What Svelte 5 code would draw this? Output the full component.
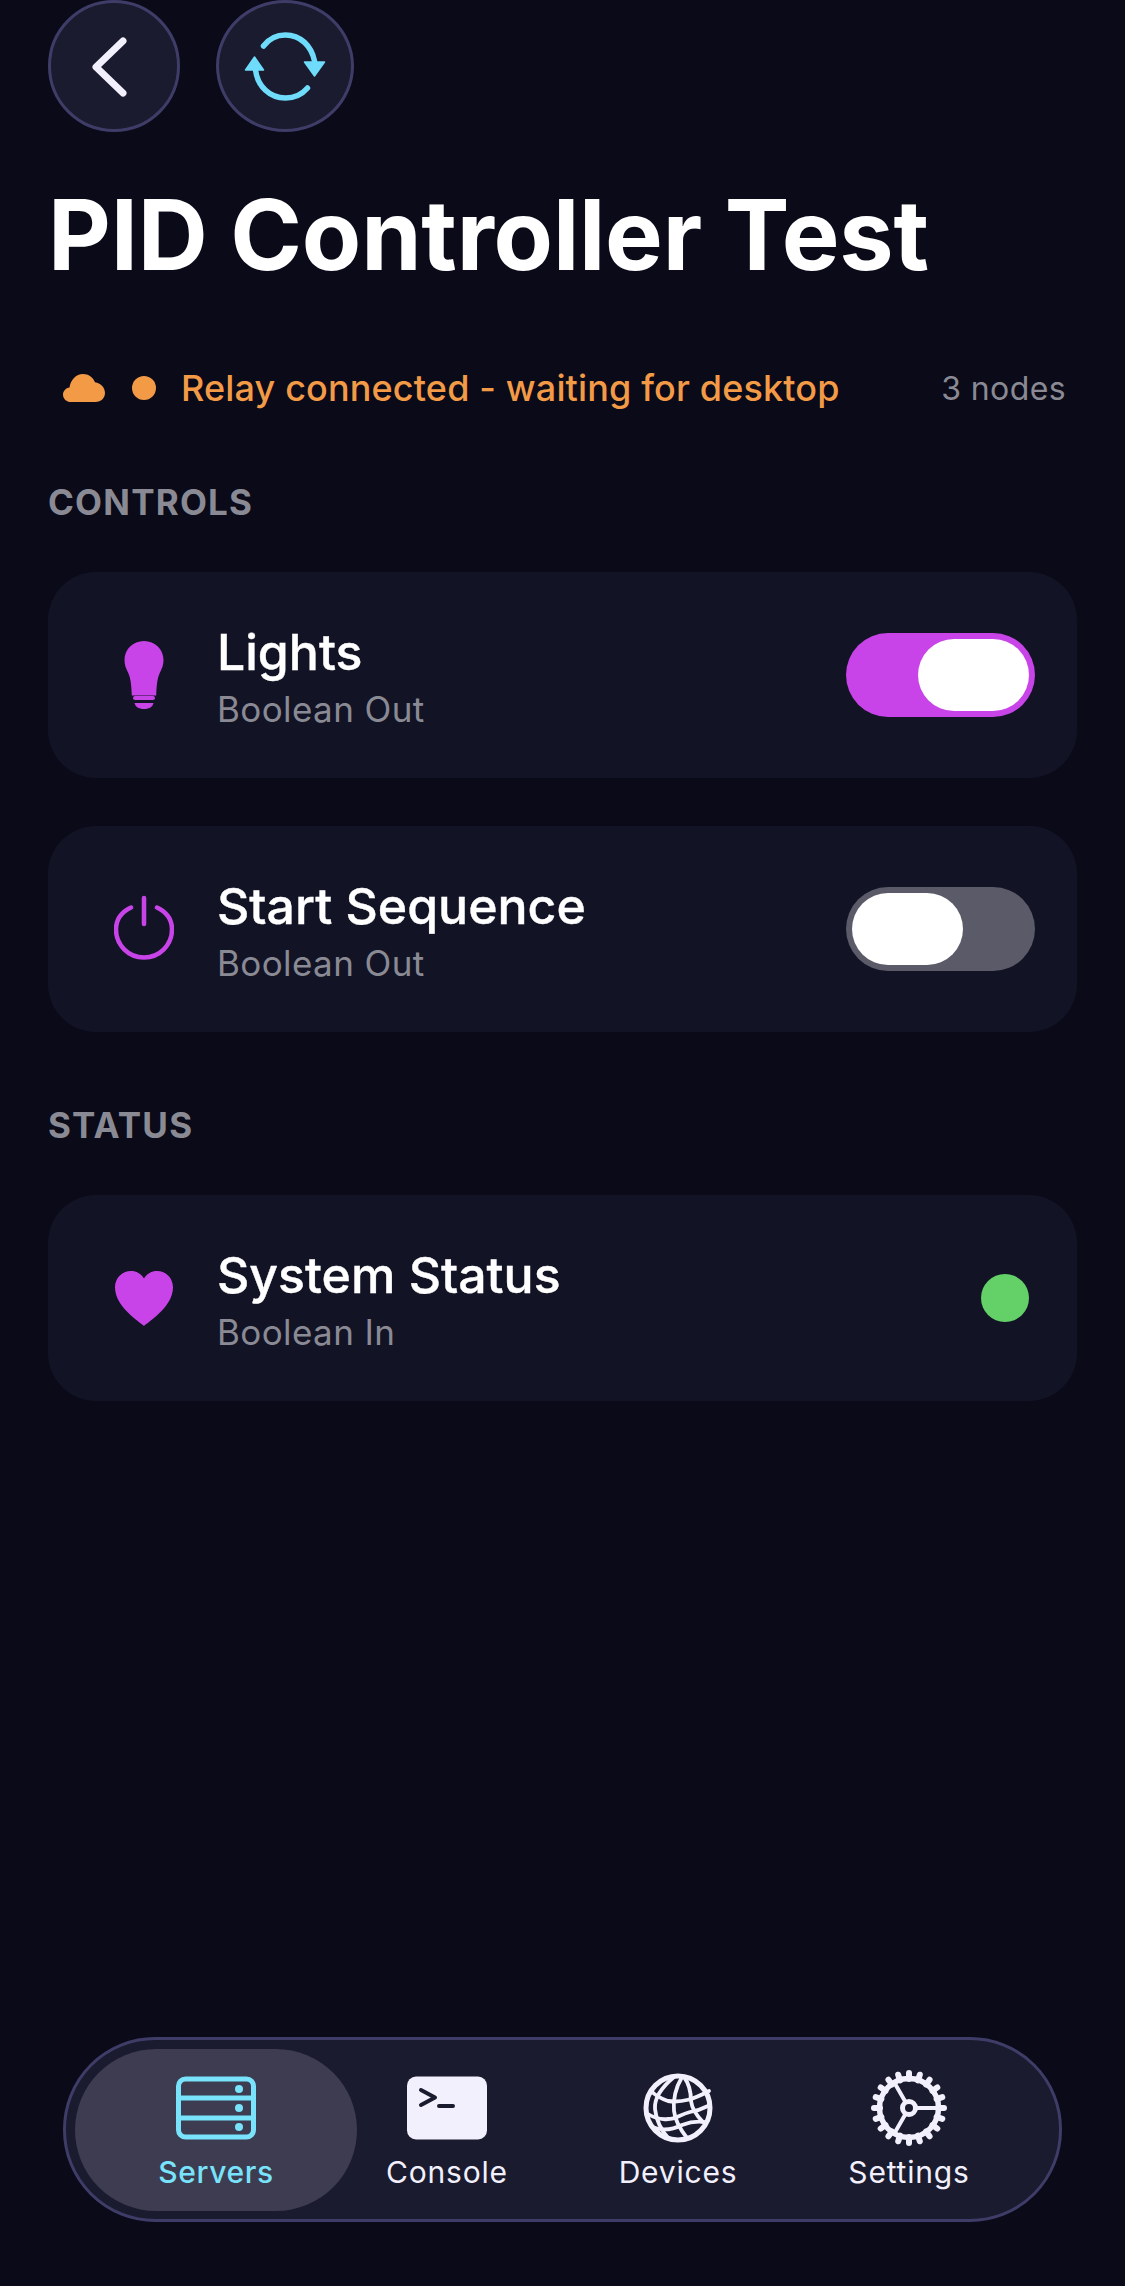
<script>
	const controls = [
		{ name: 'Lights', kind: 'Boolean Out', icon: 'bulb', on: true },
		{ name: 'Start Sequence', kind: 'Boolean Out', icon: 'power', on: false }
	]
	const tabs = ['Servers', 'Console', 'Devices', 'Settings']
	// gear teeth go round the ring
	const teeth = Array.from({ length: 20 }, (_, i) => i * 18)
</script>

{#snippet rowIcon(name)}
	{#if name === 'bulb'}
		<svg class="row-icon" viewBox="0 0 60 70" fill="#c944e8">
			<path d="M30 1C19 1 10.500 9.500 10.500 20c0 5 1.600 8.500 3.500 12.500 1.800 3.800 3.300 8.500 3.800 23h24.400c.5-14.500 2-19.200 3.800-23 1.900-4 3.500-7.500 3.500-12.500C49.500 9.500 41 1 30 1z" />
			<rect x="19" y="56" width="22" height="4" rx="2" />
			<path d="M20.500 63h19c-.8 3.800-4 6-9.500 6s-8.700-2.200-9.500-6z" />
		</svg>
	{:else if name === 'power'}
		<svg class="row-icon" viewBox="0 0 60 70" fill="none" stroke="#c944e8" stroke-linecap="round">
			<path stroke-width="4.500" d="M17 13.500C7.500 18 2 26 2 35.500c0 15.500 12.500 28 28 28s28-12.500 28-28C58 26 52.500 18 43 13.500" />
			<path stroke-width="4.500" d="M30 4v26" />
		</svg>
	{:else}
		<svg class="row-icon" viewBox="0 0 60 70" fill="#c944e8">
			<path d="M30 63C26 59 1 44 1 24.500 1 15 8 8 17 8c5.500 0 10 2.500 13 7.500C33 10.500 37.500 8 43 8c9 0 16 7 16 16.500C59 44 34 59 30 63z" />
		</svg>
	{/if}
{/snippet}

{#snippet tabIcon(name)}
	{#if name === 'Servers'}
		<svg class="tab-icon" viewBox="0 0 80 70" fill="none" stroke="#78e3fb" stroke-width="5">
			<rect x="2.500" y="6" width="75" height="58" rx="7" />
			<path d="M2.500 25h75M2.500 45h75" />
			<circle cx="63" cy="16" r="4" fill="#78e3fb" stroke="none" />
			<circle cx="63" cy="35" r="4" fill="#78e3fb" stroke="none" />
			<circle cx="63" cy="54" r="4" fill="#78e3fb" stroke="none" />
		</svg>
	{:else if name === 'Console'}
		<svg class="tab-icon" viewBox="0 0 80 70">
			<rect y="3.500" width="80" height="63" rx="9" fill="#f2f0fd" />
			<path d="M14 17l14 7.500L14 32M32 33h14" fill="none" stroke="#1a1b2e" stroke-width="4" stroke-linecap="round" stroke-linejoin="round" />
		</svg>
	{:else if name === 'Devices'}
		<svg class="tab-icon" viewBox="0 0 80 70" fill="none" stroke="#f2f0fd" stroke-width="3.800" stroke-linecap="round">
			<circle cx="40" cy="35" r="32" stroke-width="5" />
			<path d="M36 4C24 14 16 24 17 36c1 10 5 20 14 30" />
			<path d="M44 4c-7 12-9 24-8 34 1 9 6 18 13 27" />
			<path d="M46 4c6 8 7 16 7 24 1 8 6 15 12 21" />
			<path d="M13 18c6 6 11 8 17 10 14 2 26-2 41-10" />
			<path d="M8 40c8 5 15 7 22 6 8 0 11-4 22-7 6-1 12-3 18-6" />
			<path d="M14 54c10 4 20 3 30-2 8-3 14-4 22-3" />
		</svg>
	{:else}
		<svg class="tab-icon gear" viewBox="0 0 76 76" fill="none" stroke="#f2f0fd">
			{#each teeth as a}
				<path d="M38 3v6" stroke-width="6" stroke-linecap="round" transform="rotate({a} 38 38)" />
			{/each}
			<circle cx="38" cy="38" r="29.500" stroke-width="5.500" />
			<path d="M45 38h24M34.500 32L23 12M34.500 44L23 64" stroke-width="4" />
			<circle cx="38" cy="38" r="6.500" stroke-width="5" />
		</svg>
	{/if}
{/snippet}

<div class="page">
	<div class="top-btns">
		<button class="round back">
			<svg viewBox="0 0 132 132" fill="none" stroke="#f2f0fd" stroke-width="7" stroke-linecap="round" stroke-linejoin="round">
				<path d="M75 41L48 67l27 26" />
			</svg>
		</button>
		<button class="round refresh">
			<svg viewBox="0 0 137 132">
				<g fill="none" stroke="#6fdcfb" stroke-width="5.500" stroke-linecap="round">
					<path d="M47 46C53 38 61 35 69 35c15 0 26 11 29 26" />
					<path d="M39 70c2 16 14 28 30 28 8 0 16-3 22-10" />
				</g>
				<path d="M88 62h20l-10 14zM29 70h18l-9-13z" fill="#6fdcfb" stroke="#6fdcfb" stroke-width="1.500" stroke-linejoin="round" />
			</svg>
		</button>
	</div>

	<h1>PID Controller Test</h1>

	<div class="status-row">
		<svg class="cloud" viewBox="0 0 42 28" fill="#f39a47">
			<path d="M8 28C3.500 28 0 24.800 0 20.700 0 17 2.800 14 6.500 13.500 7.500 6 13 0 20 0c5.500 0 10 3.200 12 8.200 5.500.6 10 5.200 10 10.800 0 5-4 9-9.500 9z" />
		</svg>
		<span class="status-dot"></span>
		<span class="status-text">Relay connected - waiting for desktop</span>
		<span class="nodes">3 nodes</span>
	</div>

	<h2 class="first">CONTROLS</h2>
	<div class="cards">
		{#each controls as c}
			<div class="card">
				<div class="icon-box">{@render rowIcon(c.icon)}</div>
				<div class="labels">
					<div class="name">{c.name}</div>
					<div class="kind">{c.kind}</div>
				</div>
				<div class="toggle" class:on={c.on}><span class="knob"></span></div>
			</div>
		{/each}
	</div>

	<h2>STATUS</h2>
	<div class="card">
		<div class="icon-box">{@render rowIcon('heart')}</div>
		<div class="labels">
			<div class="name">System Status</div>
			<div class="kind">Boolean In</div>
		</div>
		<span class="led"></span>
	</div>

	<nav class="tabbar">
		{#each tabs as t, i}
			<div class="tab" class:active={i === 0}>
				{@render tabIcon(t)}
				<span>{t}</span>
			</div>
		{/each}
	</nav>
</div>

<style>
	:global(body) {
		background: #0a0a19;
	}
	.page {
		box-sizing: border-box;
		width: 1125px;
		height: 2286px;
		overflow: hidden;
		padding: 0 48px 64px;
		display: flex;
		flex-direction: column;
		font-family: Inter, "Liberation Sans", sans-serif;
		color: #fff;
	}
	.top-btns {
		display: flex;
		gap: 36px;
		height: 132px;
	}
	.round {
		padding: 0;
		height: 132px;
		background: #1a1b2e;
		border: 3px solid #3f3d68;
		border-radius: 50%;
		box-sizing: border-box;
	}
	.round svg {
		display: block;
		margin: -3px;
		width: calc(100% + 6px);
		height: calc(100% + 6px);
	}
	.back {
		width: 132px;
	}
	.refresh {
		width: 138px;
	}
	h1 {
		margin: 45px 0 0;
		font-size: 97px;
		line-height: 116px;
		font-weight: 700;
		letter-spacing: -0.2px;
	}
	.status-row {
		display: flex;
		align-items: center;
		margin-top: 71px;
		height: 48px;
		padding: 0 11px 0 15px;
	}
	.cloud {
		width: 42px;
		height: 28px;
		margin-right: 27px;
	}
	.status-dot {
		width: 24px;
		height: 24px;
		border-radius: 50%;
		background: #f39a47;
		margin-right: 25px;
	}
	.status-text {
		color: #f39a47;
		font-size: 36px;
		font-weight: 500;
		letter-spacing: 0.15px;
	}
	.nodes {
		margin-left: auto;
		color: #8a8a94;
		font-size: 32px;
		letter-spacing: 0.4px;
	}
	h2 {
		margin: 71px 0 0;
		color: #8a8a94;
		font-size: 35px;
		line-height: 44px;
		font-weight: 700;
		letter-spacing: 1.2px;
	}
	h2.first {
		margin-top: 68px;
	}
	.cards {
		display: flex;
		flex-direction: column;
		gap: 48px;
	}
	.card {
		box-sizing: border-box;
		height: 206px;
		display: flex;
		align-items: center;
		background: #121426;
		border-radius: 48px;
		padding: 0 42px 0 66px;
	}
	h2 + .cards,
	h2 + .card {
		margin-top: 48px;
	}
	.icon-box {
		width: 60px;
		height: 70px;
		margin-right: 43px;
	}
	.row-icon {
		display: block;
		width: 60px;
		height: 70px;
	}
	.labels {
		flex: 1;
		padding-top: 3px;
	}
	.name {
		font-size: 50px;
		line-height: 58px;
		font-weight: 500;
		-webkit-text-stroke: 0.4px #fff;
	}
	.kind {
		margin-top: 6px;
		color: #8a8a94;
		font-size: 35px;
		line-height: 44px;
		letter-spacing: 0.4px;
	}
	.toggle {
		box-sizing: border-box;
		width: 189px;
		height: 84px;
		padding: 6px;
		border-radius: 42px;
		background: #5a5a68;
		display: flex;
	}
	.toggle.on {
		background: #c944e8;
		justify-content: flex-end;
	}
	.knob {
		width: 111px;
		height: 72px;
		border-radius: 36px;
		background: #fff;
	}
	.led {
		width: 48px;
		height: 48px;
		border-radius: 50%;
		background: #63d068;
		margin-right: 6px;
	}
	.tabbar {
		box-sizing: border-box;
		margin: auto 15px 0;
		height: 185px;
		display: grid;
		grid-template-columns: repeat(4, 231px);
		justify-content: center;
		align-items: center;
		background: #1a1b2e;
		border: 3px solid #3f3d68;
		border-radius: 92px;
	}
	.tab {
		display: flex;
		flex-direction: column;
		align-items: center;
		height: 162px;
		padding-top: 24px;
		box-sizing: border-box;
		color: #f2f0fd;
		font-size: 30px;
		font-weight: 400;
		letter-spacing: 0.8px;
	}
	.tab.active {
		margin: 0 -25.500px;
		background: #3d3c50;
		border-radius: 81px;
		color: #78e3fb;
		font-weight: 500;
		letter-spacing: 0.6px;
	}
	.tab span {
		margin-top: 10px;
		line-height: 38px;
	}
	.tab-icon {
		width: 80px;
		height: 70px;
		flex: none;
	}
	.gear {
		width: 76px;
		height: 76px;
		margin: -3px 0;
	}
</style>
